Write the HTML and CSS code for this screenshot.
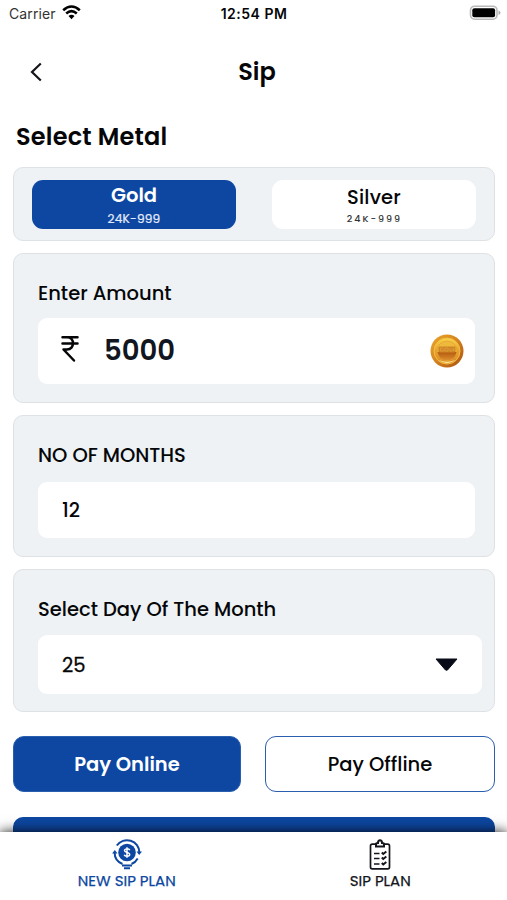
FILE: index.html
```html
<!DOCTYPE html>
<html lang="en">
<head>
<meta charset="utf-8">
<meta name="viewport" content="width=device-width, initial-scale=1">
<title>Sip</title>
<link rel="stylesheet" href="styles.css">
</head>
<body>
<div class="screen">
  <header class="status">
    <div class="carrier"><span>Carrier</span>
      <svg width="19" height="15" viewBox="0 0 19 15"><g fill="none" stroke="#000" stroke-width="2.6"><path d="M1.2 5.2Q9.500-2.200 17.800 5.200"/><path d="M4.200 8.500Q9.500 3.900 14.800 8.500"/></g><path d="M6.500 11Q9.500 8.600 12.500 11L9.500 14.200Z"/></svg>
    </div>
    <span class="clock">12:54 PM</span>
    <svg class="battery" width="32" height="16" viewBox="0 0 32 16"><rect x="1.500" y="1.200" width="26.500" height="13" rx="4.200" fill="#fff" stroke="#b9b9b9" stroke-width="1.600"/><rect x="3.300" y="3.200" width="22.800" height="9" rx="2"/><path d="M29.500 5.500Q31.500 6.200 31.500 7.700T29.500 10Z" fill="#aaa"/></svg>
  </header>

  <nav class="topbar">
    <svg class="back" width="12" height="20" viewBox="0 0 12 20"><path d="M10.800 1.500L2 10L10.800 18.500" fill="none" stroke="#15161c" stroke-width="2.200"/></svg>
    <h1 class="title">Sip</h1>
  </nav>

  <main class="content">
    <h2 class="heading">Select Metal</h2>

    <section class="panel metals">
      <div class="metal metal-active"><span class="metal-name">Gold</span><span class="purity">24K-999</span></div>
      <div class="metal"><span class="metal-name">Silver</span><span class="purity">24K-999</span></div>
    </section>

    <section class="panel amount">
      <div class="label">Enter Amount</div>
      <div class="field">
        <svg class="rupee" width="18" height="28" viewBox="0 0 18 28"><path d="M1.500 2.200H16.500M1.500 8.500H16.500M2 2.200H6C14 2.200 14 14.500 6 14.500H2.500L13 25.500" fill="none" stroke="#050608" stroke-width="2.500" stroke-linecap="round" stroke-linejoin="round"/></svg>
        <span class="sum">5000</span>
        <svg class="coin" width="34" height="34" viewBox="0 0 34 34">
          <defs>
            <linearGradient id="rim" x1="0" y1="0" x2="1" y2="1"><stop offset="0" stop-color="#eba92c"/><stop offset=".5" stop-color="#d4821f"/><stop offset="1" stop-color="#a94f10"/></linearGradient>
            <linearGradient id="face" x1="0" y1="0" x2="0" y2="1"><stop offset="0" stop-color="#f8d548"/><stop offset=".5" stop-color="#e8a22f"/><stop offset="1" stop-color="#d98a24"/></linearGradient>
            <linearGradient id="shade" x1="0" y1="0" x2="0" y2="1"><stop offset="0" stop-color="#b4590e"/><stop offset="1" stop-color="#dd9030"/></linearGradient>
          </defs>
          <circle cx="17" cy="17" r="16.500" fill="url(#rim)"/>
          <circle cx="17" cy="17" r="13" fill="url(#face)" stroke="#f3bd48" stroke-width="1"/>
          <circle cx="17" cy="17" r="10" fill="#efb93c" stroke="#dc9528" stroke-width=".5"/>
          <path d="M7.500 18H26.500Q25 26.500 17 26.500T7.500 18Z" fill="url(#shade)"/>
          <path d="M8.500 26Q17 32.500 25.500 26Q17 29.500 8.500 26Z" fill="#ffe391"/>
          <rect x="8.500" y="12.500" width="17" height="6" rx="1" fill="#cf8524"/>
          <path d="M13.500 14H10.500V17H13.500V15.500M15 14H18V17H15ZM20 14V17H22M23 14V17Q25.500 15.500 23 14" fill="none" stroke="#e6ad44" stroke-width=".5"/>
        </svg>
      </div>
    </section>

    <section class="panel months">
      <div class="label">NO OF MONTHS</div>
      <div class="field"><span class="value">12</span></div>
    </section>

    <section class="panel day">
      <div class="label">Select Day Of The Month</div>
      <div class="field"><span class="value value-day">25</span>
        <svg class="caret" width="23" height="13" viewBox="0 0 23 13"><path d="M1 1H22L12.500 12Q11.500 12.700 10.500 12Z" fill="#090c18" stroke="#090c18" stroke-linejoin="round"/></svg>
      </div>
    </section>

    <div class="actions">
      <button class="button button-primary">Pay Online</button>
      <button class="button button-outline">Pay Offline</button>
    </div>
    <div class="submit"></div>
  </main>

  <footer class="tabs">
    <div class="tab tab-active">
      <svg width="30" height="31" viewBox="0 0 30 31"><circle cx="15" cy="13.500" r="8.800" fill="#0d47a1"/><g fill="none" stroke="#0d47a1" stroke-width="2"><path d="M4.800 6.500A12.400 12.400 0 0 1 27.400 13.500M25.700 19.500A12.400 12.400 0 0 1 19.500 25M10.500 25A12.400 12.400 0 0 1 2.600 13.500"/><path d="M10 26.500H20M12 29.300H18"/></g><path d="M24.500 12.500H30L27.200 16ZM.1 14.500H5.500L2.800 11Z" fill="#0d47a1"/><path d="M17.800 11.300C17 9.300 12.500 9.400 12.500 11.600C12.500 14 17.700 12.800 17.700 15.500C17.700 17.800 13 17.900 12.200 15.800M15 8.200V18.800" fill="none" stroke="#fff" stroke-width="1.500"/></svg>
      <span>NEW SIP PLAN</span>
    </div>
    <div class="tab">
      <svg width="22" height="31" viewBox="0 0 22 31"><g fill="none" stroke="#15161c" stroke-width="1.700"><path d="M7 5.200H3.200Q1.500 5.200 1.500 7V28Q1.500 29.800 3.200 29.800H18.800Q20.500 29.800 20.500 28V7Q20.500 5.200 18.800 5.200H15"/><path d="M7 7.500V5.200Q7 4 9 4Q9 1.300 11 1.300T13 4Q15 4 15 5.200V7.500Z" stroke-width="2"/><path d="M5 14.500H10.500M5 19.500H10.500M5 25H10.500"/><path d="M12.800 13.500L14.300 15L17.300 12.500M12.800 18.500L14.300 20L17.300 17.500M12.800 24L14.300 25.500L17.300 23" stroke-width="2"/></g></svg>
      <span>SIP PLAN</span>
    </div>
  </footer>
</div>
</body>
</html>
```

FILE: styles.css
```css
* { box-sizing: border-box; }
body { margin: 0; font-family: Poppins, Inter, "Liberation Sans", sans-serif; color: #050608; background: #fff; }
svg { display: block; flex: none; }
.screen { width: 507px; height: 900px; display: flex; flex-direction: column; overflow: hidden; background: #fff; }
.status { height: 27px; flex: none; display: grid; grid-template-columns: 1fr auto 1fr; align-items: center; padding: 0 6px 0 9px; font-family: Inter, sans-serif; font-size: 14px; }
.carrier { display: flex; align-items: center; gap: 6px; color: #333; letter-spacing: .1px; }
.carrier svg { margin-top: -2px; }
.clock { font-weight: 600; font-size: 14px; letter-spacing: .5px; margin-right: 2px; }
.battery { justify-self: end; margin-top: -1px; }
.topbar { height: 89px; flex: none; display: grid; grid-template-columns: 60px 1fr 60px; align-items: center; }
.back { margin-left: 30px; }
.title { margin: -1px 0 0 7px; font-size: 24px; font-weight: 600; text-align: center; }
.content { flex: 1; min-height: 0; overflow: hidden; padding: 0 12px 0 13px; display: flex; flex-direction: column; }
.heading { flex: none; margin: 0 0 0 3px; height: 51px; line-height: 41px; font-size: 24px; font-weight: 600; letter-spacing: .2px; }
.panel { flex: none; margin-bottom: 12px; border: 1px solid #dfe2e5; border-radius: 10px; background: #eef2f5; }
.metals { height: 74px; display: flex; justify-content: space-between; padding: 12px 18px 0; }
.metal { width: 204px; height: 49px; border-radius: 11px; background: #fff; display: flex; flex-direction: column; align-items: center; }
.metal-name { font-size: 19.5px; line-height: 24px; margin-top: 6px; font-weight: 500; letter-spacing: .2px; }
.purity { font-size: 9.5px; line-height: 17px; letter-spacing: 2px; margin-right: -1px; color: #333; font-weight: 500; }
.metal-active { background: #0d47a1; color: #fff; }
.metal-active .metal-name { font-weight: 600; margin-top: 4px; letter-spacing: 0; }
.metal-active .purity { color: #e4ecfa; font-size: 12.2px; line-height: 21px; letter-spacing: .15px; margin: 0; font-weight: 400; -webkit-text-stroke: .2px; }
.amount { height: 150px; padding: 28px 19px 0 24px; }
.months { height: 142px; padding: 28px 19px 0 24px; }
.day { height: 143px; padding: 28px 12px 0 24px; }
.label { height: 24px; line-height: 24px; font-size: 19.5px; font-weight: 500; white-space: nowrap; }
.field { display: flex; align-items: center; background: #fff; border-radius: 9px; padding: 0 24px; }
.amount .field { height: 66px; margin-top: 12px; padding: 0 11px 0 23px; }
.months .field { height: 56px; margin-top: 14px; }
.day .field { height: 59px; margin-top: 13px; }
.rupee { margin-top: -4px; }
.sum { margin-left: 25px; font-size: 27.5px; font-weight: 600; color: #111620; }
.coin { margin-left: auto; }
.value { font-size: 19.5px; font-weight: 500; }
.value-day { padding-top: 1px; font-weight: 400; -webkit-text-stroke: .3px; }
.caret { margin-left: auto; }
.actions { flex: none; margin-top: 12px; display: grid; grid-template-columns: 228px 230px; justify-content: space-between; }
.button { height: 56px; padding: 0; border: 1px solid #2a5eae; border-radius: 11px; font-family: inherit; font-size: 19.5px; font-weight: 500; background: #fff; color: #050608; }
.button-primary { background: #0d47a1; color: #fff; font-weight: 600; }
.submit { flex: none; height: 56px; margin-top: 25px; border-radius: 10px; background: #0d47a1; }
.tabs { height: 68px; flex: none; position: relative; display: grid; grid-template-columns: 1fr 1fr; background: #fff; box-shadow: 0 0 12px #000e; }
.tab { display: flex; flex-direction: column; align-items: center; padding-top: 7px; font-size: 15px; font-weight: 400; color: #15161c; -webkit-text-stroke: .25px; }
.tab span { line-height: 20px; margin-top: 1px; }
.tab-active { color: #0d47a1; }
```
